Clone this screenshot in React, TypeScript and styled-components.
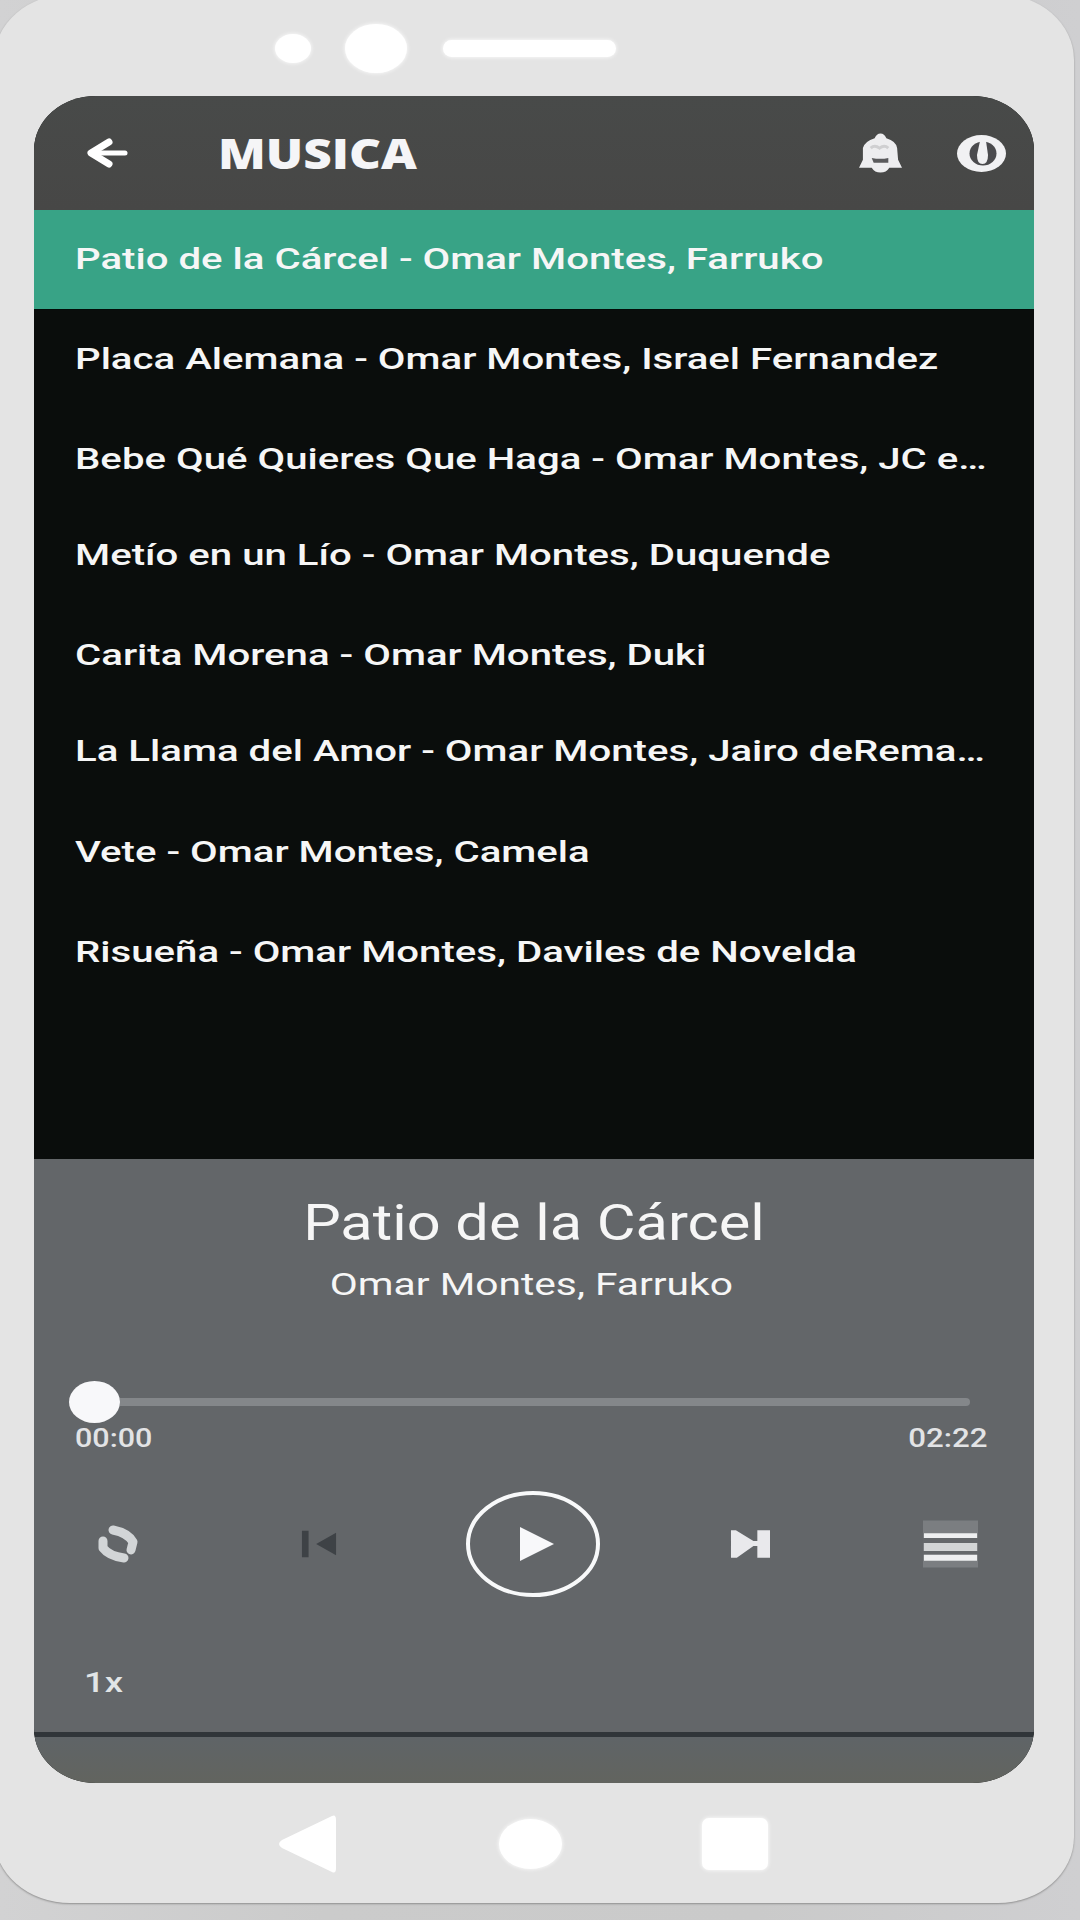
import React from "react";
import styled, { createGlobalStyle } from "styled-components";

const Global = createGlobalStyle`
  * { box-sizing: border-box; }
  body { margin: 0; background: #cbcbcb; overflow: hidden; }
`;

const Backdrop = styled.div`
  width: 1080px;
  height: 1920px;
  overflow: hidden;
  display: flex;
  background: linear-gradient(90deg, #d2d2d3, #cbcbcb 30%, #cacaca 70%, #cfcfd1);
`;

const Phone = styled.div`
  flex: none;
  width: 1080px;
  height: 1909px;
  margin: -6px 0 0 -6px;
  padding: 0 0 0 40px;
  display: flex;
  flex-direction: column;
  background: #e4e4e4;
  border-radius: 76px / 66px;
  box-shadow: 0 1px 2px #8f8f8f;
`;

const Speaker = styled.div`
  height: 102px;
  padding: 6px 0 0 241px;
  display: flex;
  align-items: center;
`;

const Blob = styled.span<{ w: number; h: number; gap?: number; r?: string }>`
  flex: none;
  width: ${(p) => p.w}px;
  height: ${(p) => p.h}px;
  margin-left: ${(p) => p.gap ?? 0}px;
  border-radius: ${(p) => p.r ?? "50%"};
  background: #fff;
  box-shadow: 0 0 4px #fff;
`;

const Screen = styled.main`
  flex: none;
  width: 1000px;
  height: 1687px;
  display: flex;
  flex-direction: column;
  overflow: hidden;
  border-radius: 62px / 54px;
  background: #0a0d0c;
  color: #f6f6f6;
  font-family: Roboto, "Liberation Sans", sans-serif;
`;

const Header = styled.header`
  flex: none;
  height: 114px;
  padding: 0 28px 0 50px;
  display: flex;
  align-items: center;
  background: linear-gradient(#484a49, #474746);
`;

const Stretch = styled.span<{ x: number; origin?: string }>`
  display: block;
  flex: none;
  white-space: pre;
  transform: scaleX(${(p) => p.x});
  transform-origin: ${(p) => p.origin ?? "left"} center;
`;

const Heading = styled.h1`
  flex: 1;
  margin: 0 0 0 89px;
  font: 800 43px/60px "Open Sans", "Noto Sans", sans-serif;
  color: #f5f5f7;
`;

const List = styled.ul`
  flex: none;
  height: 949px;
  margin: 0;
  padding: 0;
  list-style: none;
`;

const Track = styled.li<{ pitch: number; active?: boolean }>`
  height: ${(p) => p.pitch}px;
  padding: 31px 0 0 41px;
  border-bottom: ${(p) => (p.active ? "1px solid #020b07" : "0")};
  background: ${(p) => (p.active ? "#38a386" : "transparent")};
  font-size: 30px;
  font-weight: 500;
  line-height: 35px;
`;

const Player = styled.section`
  flex: none;
  height: 573px;
  display: flex;
  flex-direction: column;
  background: #636669;
`;

const Title = styled.h2`
  margin: 32px 0 0;
  display: flex;
  justify-content: center;
  font-size: 50px;
  font-weight: 400;
  line-height: 64px;
`;

const Artist = styled.p`
  margin: 12px 5px 0 0;
  display: flex;
  justify-content: center;
  font-size: 31px;
  font-weight: 400;
  line-height: 36px;
`;

const Seek = styled.div`
  height: 42px;
  margin: 78px 64px 0 35px;
  display: flex;
  align-items: center;
`;

const Thumb = styled.span`
  width: 51px;
  height: 42px;
  border-radius: 50%;
  background: #f8f8fa;
`;

const Rail = styled.span`
  flex: 1;
  height: 8px;
  border-radius: 0 4px 4px 0;
  background: #84878a;
`;

const Times = styled.div`
  margin: 1px 47px 0 41px;
  display: flex;
  justify-content: space-between;
  font-size: 25px;
  font-weight: 500;
  line-height: 29px;
  color: #e2e3e5;
`;

const Controls = styled.div`
  height: 106px;
  margin: 38px 0 0 63px;
  display: flex;
  align-items: center;
`;

const IconButton = styled.button<{ w: number; h: number; gap?: number }>`
  flex: none;
  width: ${(p) => p.w}px;
  height: ${(p) => p.h}px;
  margin: 0 0 0 ${(p) => p.gap ?? 0}px;
  padding: 0;
  border: 0;
  background: none;
  svg { display: block; width: 100%; height: 100%; }
`;

const Speed = styled.div`
  margin: 70px 0 0 50px;
  font-size: 27px;
  font-weight: 500;
  line-height: 32px;
  color: #e2e5e6;
`;

const Footer = styled.footer`
  flex: 1;
  border-top: 5px solid #303539;
  background: linear-gradient(#5f6467, #62645f);
`;

const NavBar = styled.nav`
  flex: 1;
  padding: 2px 0 0 244px;
  display: flex;
  align-items: center;
`;

const tracks = [
  { name: "Patio de la Cárcel - Omar Montes, Farruko", pitch: 100 },
  { name: "Placa Alemana - Omar Montes, Israel Fernandez", pitch: 100 },
  { name: "Bebe Qué Quieres Que Haga - Omar Montes, JC e…", pitch: 96 },
  { name: "Metío en un Lío - Omar Montes, Duquende", pitch: 100 },
  { name: "Carita Morena - Omar Montes, Duki", pitch: 96 },
  { name: "La Llama del Amor - Omar Montes, Jairo deRema…", pitch: 101 },
  { name: "Vete - Omar Montes, Camela", pitch: 100 },
  { name: "Risueña - Omar Montes, Daviles de Novelda", pitch: 100 },
];

export default function App() {
  return (
    <Backdrop>
      <Global />
      <Phone>
        <Speaker>
          <Blob w={36} h={29} />
          <Blob w={62} h={49} gap={34} />
          <Blob w={173} h={17} gap={36} r="9px" />
        </Speaker>
        <Screen>
          <Header>
            <IconButton w={45} h={32} aria-label="Volver">
              <svg viewBox="0 0 45 32" fill="none" stroke="#fff" strokeLinecap="round" strokeLinejoin="round">
                <path strokeWidth="5" d="M41 16H8" />
                <path strokeWidth="7" d="M25 5L7 16l18 11" />
              </svg>
            </IconButton>
            <Heading><Stretch x={1.15}>MUSICA</Stretch></Heading>
            <IconButton w={43} h={40} aria-label="Notificaciones">
              <svg viewBox="0 0 44 40">
                <path fill="#ededef" d="M16 5Q18 0 22 0t6 5q10 3 11 10l1 12 4 8H31q-3 5-9 5t-9-5H0l4-8V15Q6 8 16 5Z" />
                <path fill="#5a5a5c" d="M13 25q9 2 17 0v5H15Z" />
                <path fill="none" stroke="#cfcfd1" strokeWidth="3" d="M12 15q4-4 9 0 5-4 9 0" />
              </svg>
            </IconButton>
            <IconButton w={49} h={37} gap={55} aria-label="Temporizador">
              <svg viewBox="0 0 49 37">
                <ellipse cx="24.5" cy="18.5" rx="24.5" ry="18.5" fill="#f1f1f3" />
                <ellipse cx="26" cy="18.5" rx="13.5" ry="12" fill="#4b4b4e" />
                <path fill="#f1f1f3" d="M23 6h6l2 14q0 9-5.500 9T20 20Z" />
              </svg>
            </IconButton>
          </Header>
          <List>
            {tracks.map((t, i) => (
              <Track key={t.name} pitch={t.pitch} active={i === 0}>
                <Stretch x={1.339}>{t.name}</Stretch>
              </Track>
            ))}
          </List>
          <Player>
            <Title><Stretch x={1.19} origin="center">Patio de la Cárcel</Stretch></Title>
            <Artist><Stretch x={1.314} origin="center">Omar Montes, Farruko</Stretch></Artist>
            <Seek><Thumb /><Rail /></Seek>
            <Times>
              <Stretch x={1.22}>00:00</Stretch>
              <Stretch x={1.25} origin="right">02:22</Stretch>
            </Times>
            <Controls>
              <IconButton w={42} h={40} aria-label="Repetir">
                <svg viewBox="0 0 42 40" fill="none" stroke="#d2d5d7" strokeWidth="9" strokeLinecap="round" strokeLinejoin="round">
                  <path d="M16 6q15 3 20 12l-2 8M27 34Q12 32 6 24V17" />
                </svg>
              </IconButton>
              <IconButton w={36} h={28} gap={162} aria-label="Anterior">
                <svg viewBox="0 0 38 28" fill="#3e4246"><path d="M1 0h7v28H1ZM37 2v24L16 14Z" /></svg>
              </IconButton>
              <IconButton w={134} h={106} gap={129} aria-label="Reproducir">
                <svg viewBox="0 0 134 106">
                  <ellipse cx="67" cy="53" rx="65" ry="51" fill="none" stroke="#f8f9fa" strokeWidth="4" />
                  <path d="M54 36v34l34-17Z" fill="#f8f8fa" />
                </svg>
              </IconButton>
              <IconButton w={41} h={28} gap={130} aria-label="Siguiente">
                <svg viewBox="0 0 42 28" fill="#e9e9ec"><path d="M1 0h5l18 11h4V0h13v28H28V16h-4L7 28H1Z" /></svg>
              </IconButton>
              <IconButton w={55} h={48} gap={152} aria-label="Lista">
                <svg viewBox="0 0 56 48">
                  <path fill="#7b7e81" d="M0 0h56v48H0Z" />
                  <path fill="#65686b" d="M0 18h56v5H0ZM0 31h56v4H0Z" />
                  <path fill="#eeeff0" d="M1 13h54v5H1ZM1 35h54v6H1Z" />
                  <path fill="#d3d5d6" d="M1 23h54v8H1Z" />
                </svg>
              </IconButton>
            </Controls>
            <Speed><Stretch x={1.35}>1x</Stretch></Speed>
          </Player>
          <Footer />
        </Screen>
        <NavBar>
          <svg width="60" height="58" viewBox="0 0 60 58" fill="#fff">
            <path d="M54 1q4-2 4 4v48q0 6-4 4L4 33q-6-4 0-8Z" />
          </svg>
          <Blob w={63} h={50} gap={161} />
          <Blob w={66} h={52} gap={140} r="7px" />
        </NavBar>
      </Phone>
    </Backdrop>
  );
}
